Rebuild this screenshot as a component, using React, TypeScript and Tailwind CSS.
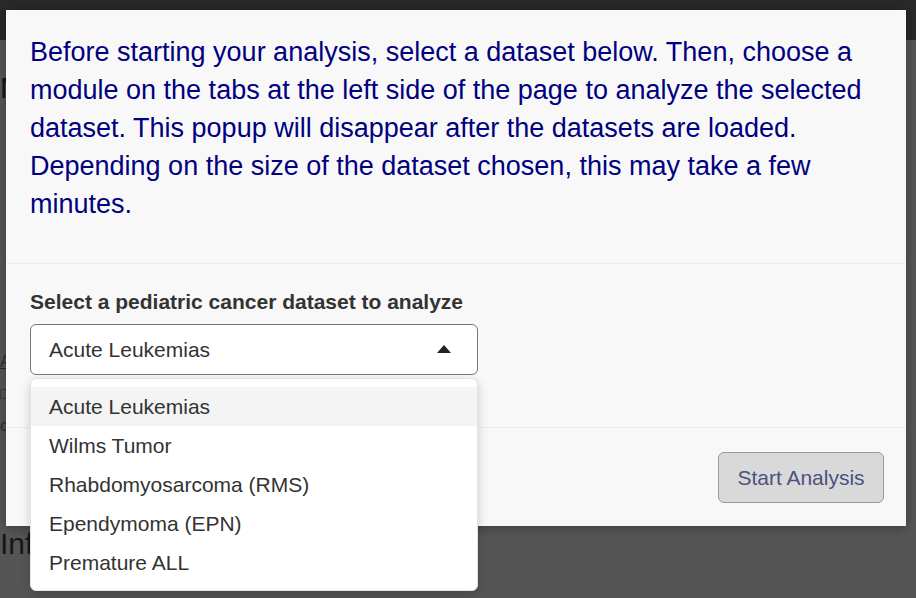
import { useState } from 'react'

const datasets = [
  'Acute Leukemias',
  'Wilms Tumor',
  'Rhabdomyosarcoma (RMS)',
  'Ependymoma (EPN)',
  'Premature ALL',
]

// dimmed page behind the modal, only its left edge shows
function Backdrop() {
  return (
    <div className="h-[598px] w-full bg-[#555555] text-[#161616]">
      <div className="h-10 bg-[#292929]" />
      <div className="pt-[28px] text-[30px] leading-[40px]">M</div>
      <div className="mt-[238px] flex flex-col text-[16px] leading-[32px] text-[#2a2a40]">
        <span className="underline">A</span>
        <span>□</span>
        <span>c</span>
      </div>
      <div className="mt-[82px] text-[30px] leading-[40px]">Inf</div>
    </div>
  )
}

function DatasetSelect() {
  const [value, setValue] = useState(datasets[0])

  return (
    <div className="relative w-[448px]">
      <div className="flex h-[51px] items-center justify-between rounded-[6px] border border-[#777777] bg-white pl-[18px] pr-[26px] text-[21px] text-[#333333]">
        <span>{value}</span>
        <svg width="14" height="8" viewBox="0 0 14 8" className="mb-[2px]">
          <path d="M0 8 L7 0 L14 8 Z" fill="#222222" />
        </svg>
      </div>
      <ul className="absolute left-0 top-[54px] z-10 w-full rounded-[6px] border border-[#e2e2e2] bg-white py-[8px] shadow-[0_4px_12px_rgba(0,0,0,0.18)]">
        {datasets.map((d) => (
          <li
            key={d}
            onClick={() => setValue(d)}
            className={`flex h-[39px] items-center pl-[18px] text-[21px] text-[#333333] ${
              d === value ? 'bg-[#f4f4f4]' : ''
            }`}
          >
            {d}
          </li>
        ))}
      </ul>
    </div>
  )
}

export default function App() {
  return (
    <div className="relative h-[598px] w-[916px] overflow-hidden font-['Liberation_Sans',Arial,sans-serif]">
      <Backdrop />

      {/* modal */}
      <div className="absolute left-[6px] top-[10px] w-[900px] bg-[#f8f8f8] shadow-[0_2px_10px_rgba(0,0,0,0.3)]">
        <div className="border-b border-[#ececec] px-[24px] pb-[40px] pt-[23px]">
          <p className="text-[27px] leading-[38px] text-[#000080]">
            Before starting your analysis, select a dataset below. Then, choose a module on the tabs at the left
            side of the page to analyze the selected dataset. This popup will disappear after the datasets are
            loaded. Depending on the size of the dataset chosen, this may take a few minutes.
          </p>
        </div>

        <div className="border-b border-[#ececec] px-[24px] pb-[52px] pt-[26px]">
          <label className="mb-[10px] block text-[21px] font-bold leading-[24px] text-[#333333]">
            Select a pediatric cancer dataset to analyze
          </label>
          <DatasetSelect />
        </div>

        <div className="flex justify-end px-[22px] pb-[23px] pt-[24px]">
          <button className="h-[51px] w-[166px] rounded-[6px] border border-[#9a9a9a] bg-[#d9d9d9] text-[21px] text-[#4b5280]">
            Start Analysis
          </button>
        </div>
      </div>
    </div>
  )
}
